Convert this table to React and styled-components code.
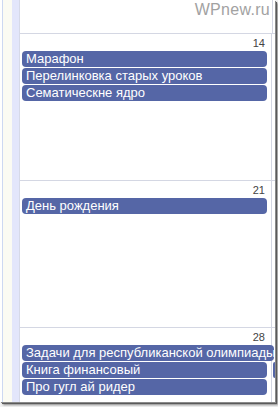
import styled, { createGlobalStyle } from "styled-components";

const GlobalStyle = createGlobalStyle`
  html, body {
    margin: 0;
    padding: 0;
    background: #ffffff;
    overflow: hidden;
  }
`;

const Page = styled.div`
  width: 278px;
  height: 407px;
  background: #f2f2f2;
`;

const Shot = styled.div`
  display: flex;
  width: 275px;
  height: 402px;
  background: #ffffff;
  overflow: hidden;
  box-shadow: 1px 1px 0 #8a8a8a, 2px 2px 0 #5a5a5a, 3px 3px 2px rgba(0, 0, 0, 0.45);
`;

const Gutter = styled.div`
  flex: 0 0 20px;
  background: linear-gradient(
    to right,
    #ffffff 0 2px,
    #cdd8f2 2px 3px,
    #fbfbf3 3px 12px,
    #e3e6fb 12px 19px,
    #d6d9e8 19px 20px
  );
`;

const Calendar = styled.div`
  flex: 1;
  display: flex;
  flex-direction: column;
  min-width: 0;
`;

const TopRow = styled.div`
  height: 33px;
  flex: 0 0 33px;
  display: flex;
  border-bottom: 1px solid #d4d7e3;
`;

const TopCell = styled.div`
  width: 252px;
  flex: 0 0 252px;
  border-right: 1px solid #d4d7e3;
  display: flex;
  justify-content: flex-end;
  align-items: flex-start;
`;

const Watermark = styled.span`
  font-family: "Liberation Sans", Arial, sans-serif;
  font-size: 16px;
  line-height: 16px;
  color: #a2a2a2;
  padding: 2px 2px 0 0;
  letter-spacing: 0.3px;
`;

const WeekRow = styled.div`
  display: flex;
  flex: 0 0 ${({ $height }) => $height}px;
  height: ${({ $height }) => $height}px;
  border-bottom: ${({ $last }) => ($last ? "none" : "1px solid #d4d7e3")};
`;

const DayCell = styled.div`
  width: 252px;
  flex: 0 0 252px;
  border-right: 1px solid #d4d7e3;
  display: flex;
  flex-direction: column;
  gap: 1px;
  padding: 0 4px 0 2px;
  box-sizing: border-box;
`;

const NextCell = styled.div`
  flex: 1;
  display: flex;
  flex-direction: column;
  gap: 1px;
  padding-left: 1px;
`;

const DateNum = styled.div`
  height: 16px;
  font-family: "Liberation Sans", Arial, sans-serif;
  font-size: 11px;
  line-height: 14px;
  padding-top: 2px;
  box-sizing: border-box;
  text-align: right;
  padding-right: 2px;
  color: #444;
`;

const EventBar = styled.div`
  height: 16px;
  flex: 0 0 16px;
  background: ${({ $ghost }) => ($ghost ? "transparent" : "#5566a6")};
  border-radius: 4px;
  color: #ffffff;
  font-family: "Liberation Sans", Arial, sans-serif;
  font-size: 13px;
  line-height: 16px;
  padding-left: 4px;
  white-space: nowrap;
  overflow: hidden;
  width: ${({ $overflow }) => ($overflow ? "calc(100% + 7px)" : "auto")};
  box-sizing: border-box;
`;

const weeks = [
  {
    day: 14,
    events: [
      { title: "Марафон" },
      { title: "Перелинковка старых уроков" },
      { title: "Сематическне ядро" },
    ],
    next: [],
  },
  {
    day: 21,
    events: [{ title: "День рождения" }],
    next: [],
  },
  {
    day: 28,
    events: [
      { title: "Задачи для республиканской олимпиады", overflow: true },
      { title: "Книга финансовый" },
      { title: "Про гугл ай ридер" },
    ],
    next: [{ ghost: true }, { title: "" }],
  },
];

const App = () => {
  return (
    <Page>
      <GlobalStyle />
      <Shot>
        <Gutter />
        <Calendar>
          <TopRow>
            <TopCell>
              <Watermark>WPnew.ru</Watermark>
            </TopCell>
          </TopRow>
          {weeks.map(({ day, events, next }, i) => (
            <WeekRow key={day} $height={i === weeks.length - 1 ? 74 : 146} $last={i === weeks.length - 1}>
              <DayCell>
                <DateNum>{day}</DateNum>
                {events.map(({ title, overflow }) => (
                  <EventBar key={title} $overflow={overflow}>
                    {title}
                  </EventBar>
                ))}
              </DayCell>
              <NextCell>
                <DateNum />
                {next.map(({ title, ghost }, j) => (
                  <EventBar key={j} $ghost={ghost}>
                    {title}
                  </EventBar>
                ))}
              </NextCell>
            </WeekRow>
          ))}
        </Calendar>
      </Shot>
    </Page>
  );
};

export default App;
